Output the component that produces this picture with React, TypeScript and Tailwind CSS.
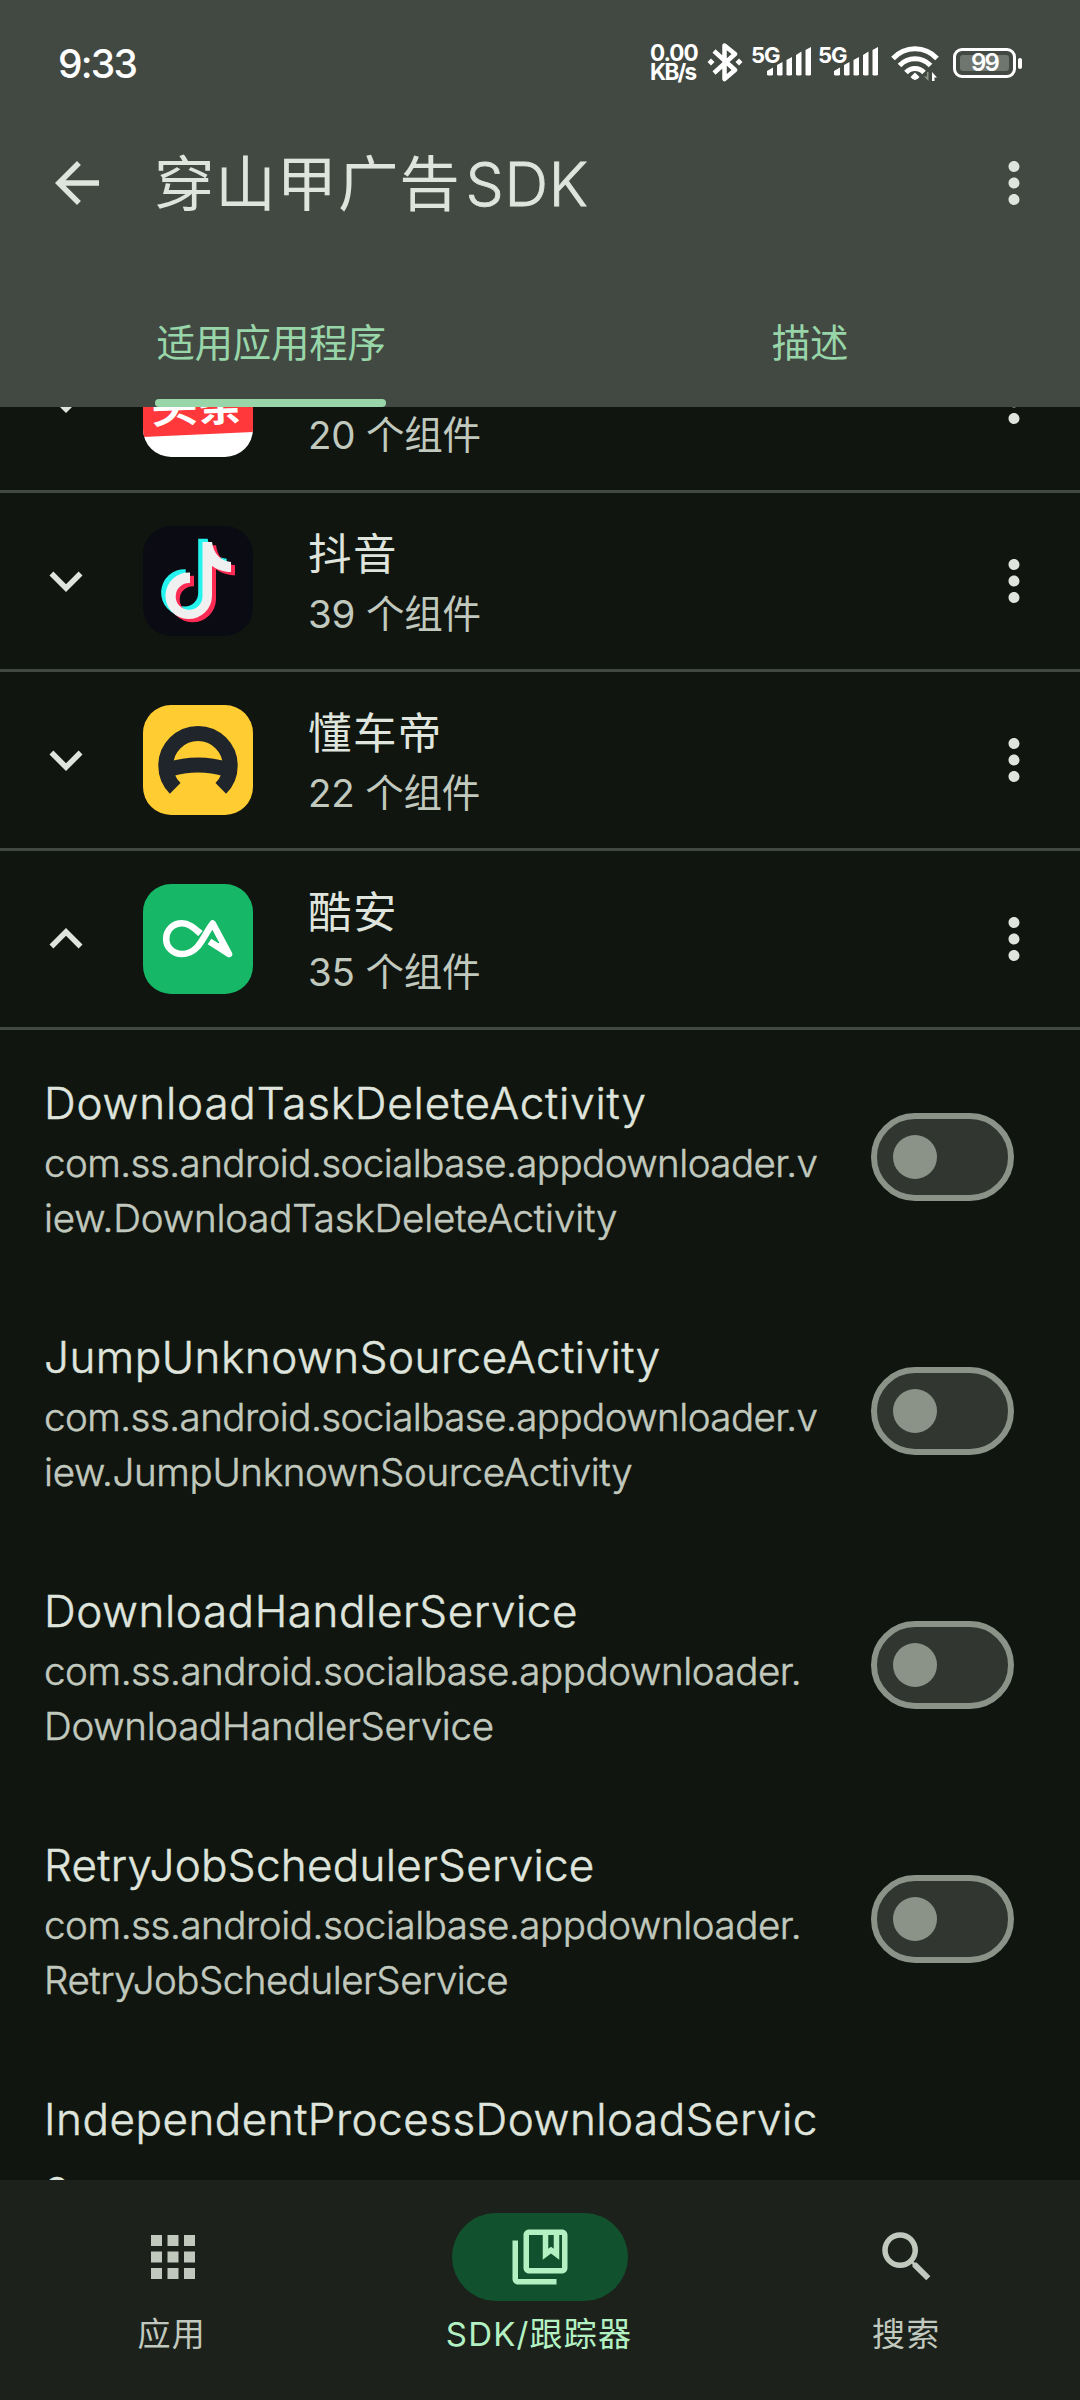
import type { ReactNode } from "react";
import { MdApps, MdArrowBack, MdExpandLess, MdExpandMore, MdMoreVert, MdSearch } from "react-icons/md";
import { twMerge } from "tailwind-merge";

interface AppEntry {
    name: string;
    count: number;
    icon: ReactNode;
    expanded?: boolean;
}

interface Line {
    text: string;
    tracking: string;
}

interface ComponentEntry {
    title: Line[];
    path: Line[];
}

const NOTE_PATH =
    "M59.5 16H69C70.5 27 77 35 88 36V46C80.5 46 74 43.5 69 40V70A23.3 23.3 0 1 1 47 46.5V57A13.4 13.4 0 1 0 59.5 70Z";

function ToutiaoIcon() {
    return (
        <svg viewBox="0 0 110 110" className="size-[110px] rounded-[28px] bg-white">
            <path d="M0 0H110V85L0 90Z" fill="#ff383c" />
            <text
                x="9"
                y="75"
                textLength="92"
                lengthAdjust="spacingAndGlyphs"
                transform="rotate(-2 55 75)"
                className="fill-white font-['Noto_Sans_CJK_SC',sans-serif] text-[42px] font-bold">
                头条
            </text>
        </svg>
    );
}

function DouyinIcon() {
    return (
        <svg viewBox="0 0 110 110" className="size-[110px] rounded-[28px] bg-[#0b0b14]">
            <path d={NOTE_PATH} fill="#25f4ee" transform="translate(-4.3 -3.2)" />
            <path d={NOTE_PATH} fill="#fe2c55" transform="translate(4 3.2)" />
            <path d={NOTE_PATH} fill="#f0f0f0" />
        </svg>
    );
}

function DongchediIcon() {
    return (
        <svg viewBox="0 0 110 110" className="size-[110px] rounded-[28px] bg-[#ffcd32]">
            <g fill="none" stroke="#20242b" strokeWidth="15">
                <path d="M32.2 83.4A32.2 32.2 0 1 1 77.8 83.4" />
                <path d="M26 64.5Q55 55.5 84 64.5" />
            </g>
        </svg>
    );
}

function CoolapkIcon() {
    return (
        <svg viewBox="0 0 110 110" className="size-[110px] rounded-[28px] bg-[#16b868]">
            <path
                d="M57.5 49.5C51 44 46 39.3 39 39.3C30 39.3 23.2 46 23.2 55C23.2 63.5 30 70 39 70C56 70 60 52 69.7 39.5L86 70L66.5 57.5"
                fill="none"
                stroke="white"
                strokeWidth="6.6"
                strokeLinejoin="round"
            />
            <path d="M76.5 58.5L74 52L86 70L73 61.5Z" fill="white" />
        </svg>
    );
}

const apps: AppEntry[] = [
    { name: "今日头条", count: 20, icon: <ToutiaoIcon /> },
    { name: "抖音", count: 39, icon: <DouyinIcon /> },
    { name: "懂车帝", count: 22, icon: <DongchediIcon /> },
    { name: "酷安", count: 35, icon: <CoolapkIcon />, expanded: true },
];

// 换行位置固定，长类名会在任意字符处断开
const components: ComponentEntry[] = [
    {
        title: [{ text: "DownloadTaskDeleteActivity", tracking: "tracking-[0.82px]" }],
        path: [
            { text: "com.ss.android.socialbase.appdownloader.v", tracking: "tracking-[-0.55px]" },
            { text: "iew.DownloadTaskDeleteActivity", tracking: "tracking-[-0.18px]" },
        ],
    },
    {
        title: [{ text: "JumpUnknownSourceActivity", tracking: "tracking-[0.5px]" }],
        path: [
            { text: "com.ss.android.socialbase.appdownloader.v", tracking: "tracking-[-0.55px]" },
            { text: "iew.JumpUnknownSourceActivity", tracking: "tracking-[-0.36px]" },
        ],
    },
    {
        title: [{ text: "DownloadHandlerService", tracking: "tracking-[0.57px]" }],
        path: [
            { text: "com.ss.android.socialbase.appdownloader.", tracking: "tracking-[-0.43px]" },
            { text: "DownloadHandlerService", tracking: "tracking-[-0.3px]" },
        ],
    },
    {
        title: [{ text: "RetryJobSchedulerService", tracking: "tracking-[0.27px]" }],
        path: [
            { text: "com.ss.android.socialbase.appdownloader.", tracking: "tracking-[-0.43px]" },
            { text: "RetryJobSchedulerService", tracking: "tracking-[-0.5px]" },
        ],
    },
    {
        title: [
            { text: "IndependentProcessDownloadServic", tracking: "tracking-[0.5px]" },
            { text: "e", tracking: "tracking-normal" },
        ],
        path: [],
    },
];

function Signal() {
    return (
        <div className="flex w-[61px]">
            <span className="-mr-3 h-6 w-7 text-[22px] leading-6 font-bold tracking-[-1px]">5G</span>
            <svg viewBox="0 0 45 32" className="mt-0.5 h-8 w-[45px] shrink-0 fill-white">
                <path d="M0 30V26L6 22.5V30Q3 31 0 30ZM10 30V20L15.500 17V30Q13 31 10 30ZM19.500 30V15L25 12V30Q22 31 19.500 30ZM29 30V10L34.500 6.500V30Q32 31 29 30ZM38.500 30V5L44 2V30Q41 31 38.500 30Z" />
            </svg>
        </div>
    );
}

function StatusBar() {
    return (
        <div className="flex h-[127px] justify-between pr-[58px] pl-[58px] text-white">
            <span className="mt-[40px] text-[39px] leading-12 font-medium tracking-[-1.8px]">9:33</span>
            <div className="mt-[41px] flex h-11 items-start">
                <div className="w-[57px] pt-0.5 text-[22.500px] leading-5 font-bold whitespace-nowrap">
                    <p className="tracking-[-1px]">0.00</p>
                    <p className="-mt-px tracking-[-1.8px]">KB/s</p>
                </div>
                <svg viewBox="0 0 36 40" className="mt-px h-10 w-9" fill="none" stroke="white" strokeWidth="4.500">
                    <path d="M7 9L28 28L17.500 37V3.500L28 12L7 31" strokeLinejoin="round" />
                    <path d="M4 16.500L7.500 20L4 23.500L.5 20ZM32 16.500L35.500 20L32 23.500L28.500 20Z" fill="white" stroke="none" />
                </svg>
                <div className="ml-2 flex gap-1.5 pt-0.5">
                    <Signal />
                    <Signal />
                </div>
                <svg viewBox="0 0 48 36" className="mt-[5px] ml-3 h-9 w-12" fill="none" stroke="white" strokeWidth="5">
                    <path d="M2 12.500C14 -.5 34 -.5 46 12.500" />
                    <path d="M8.500 19.500C17 10.500 31 10.500 39.500 19.500" />
                    <path d="M15 26.500C20 21 28 21 33 26.500" />
                    <path d="M24 26.500L28.500 31Q24 37 19.500 31Z" fill="white" stroke="none" />
                    <path d="M37.500 26V35L33 30.500H36V26Z" fill="#8b9389" stroke="none" />
                    <path d="M41 35V26L46 31.500H43.500V35Z" fill="white" stroke="none" />
                </svg>
                <div className="mt-[7px] ml-[14px] flex items-center gap-0.5">
                    <div className="flex h-[30px] w-[63px] rounded-[9px] border-3 border-white p-1">
                        <div className="flex flex-1 items-center justify-center rounded-[3px] bg-[#6f766f] text-[24px] leading-none font-semibold tracking-[-1.8px]">
                            99
                        </div>
                    </div>
                    <div className="h-[11px] w-1 rounded-sm bg-white" />
                </div>
            </div>
        </div>
    );
}

function AppRow({ name, count, icon, expanded }: AppEntry) {
    return (
        <div className="flex h-[179px] items-center border-b-3 border-[#424942] pr-[33px] pl-[33px]">
            {expanded ? <MdExpandLess className="size-[66px]" /> : <MdExpandMore className="size-[66px]" />}
            <div className="ml-11">{icon}</div>
            <div className="ml-[55px] flex-1 pt-px">
                <p className="text-[43.500px] leading-[66px] tracking-[1.4px]">{name}</p>
                <p className="text-[38.500px] leading-[55px] tracking-[-0.2px] text-[#c1c9be]">{count} 个组件</p>
            </div>
            <MdMoreVert className="size-[66px]" />
        </div>
    );
}

function TitleLine({ text, tracking }: Line) {
    return (
        <p className={twMerge("text-[44px] leading-[66px] font-light [-webkit-text-stroke:0.5px]", tracking)}>{text}</p>
    );
}

function ComponentRow({ title, path }: ComponentEntry) {
    return (
        <div className="flex min-h-[254px] items-center justify-between pr-[66px] pl-11">
            <div className="pt-0.5 whitespace-nowrap">
                {title.map(line => (
                    <TitleLine key={line.text} {...line} />
                ))}
                {path.map(({ text, tracking }) => (
                    <p
                        key={text}
                        className={twMerge(
                            "text-[38.500px] leading-[55px] font-light text-[#c1c9be] [-webkit-text-stroke:0.5px]",
                            tracking,
                        )}>
                        {text}
                    </p>
                ))}
            </div>
            <div className="flex h-22 w-[143px] shrink-0 items-center rounded-full border-6 border-[#8b9389] bg-[#313630] pl-4">
                <div className="size-11 rounded-full bg-[#8b9389]" />
            </div>
        </div>
    );
}

function NavItem({ icon, label, active }: { icon: ReactNode; label: string; active?: boolean }) {
    return (
        <div className={twMerge("flex flex-1 flex-col items-center gap-[11px] text-[#c1c9be]", active && "text-[#b3f1c3]")}>
            <div className={twMerge("flex h-22 w-44 items-center justify-center rounded-full", active && "bg-[#12512d]")}>
                {icon}
            </div>
            <span className="pr-0.5 text-[33px] leading-11 tracking-[1.2px]">{label}</span>
        </div>
    );
}

export default function App() {
    return (
        <div
            lang="zh-CN"
            className="flex h-[2400px] w-[1080px] flex-col overflow-hidden bg-[#101510] font-['Inter','Noto_Sans_CJK_SC',sans-serif] text-[#dfe4dc]">
            <header className="h-[407px] shrink-0 bg-[#424942]">
                <StatusBar />
                <div className="flex h-28 items-center pr-[33px] pl-11">
                    <MdArrowBack className="size-[66px]" />
                    <h1 className="ml-11 flex-1 pt-0.5 text-[60.500px] tracking-[0.8px]">
                        穿山甲广告<span className="ml-[5px] font-light [-webkit-text-stroke:0.8px]">SDK</span>
                    </h1>
                    <MdMoreVert className="size-[66px]" />
                </div>
                <div className="mt-[36px] flex h-[132px] text-[38.500px] leading-[136px] text-[#98d5a9]">
                    <div className="flex flex-1 flex-col items-center">
                        <span className="h-[124px] pl-0.5 tracking-[-0.3px]">适用应用程序</span>
                        <span className="h-2 w-[231px] rounded-full bg-[#98d5a9]" />
                    </div>
                    <span className="flex-1 text-center tracking-[-0.3px]">描述</span>
                </div>
            </header>

            <main className="min-h-0 flex-1 overflow-hidden">
                {/* 列表已向上滚动，首行被标题栏遮住一半 */}
                <div className="-mt-[93px]">
                    {apps.map(app => (
                        <AppRow key={app.name} {...app} />
                    ))}
                    {components.slice(0, 4).map(item => (
                        <ComponentRow key={item.title[0].text} {...item} />
                    ))}
                    <div className="px-11 pt-10 whitespace-nowrap">
                        {components[4].title.map(line => (
                            <TitleLine key={line.text} {...line} />
                        ))}
                    </div>
                </div>
            </main>

            <nav className="flex h-[220px] shrink-0 gap-[22px] bg-[#1c211c] pt-[33px]">
                <NavItem icon={<MdApps className="size-[66px]" />} label="应用" />
                <NavItem
                    active
                    label="SDK/跟踪器"
                    icon={
                        <svg viewBox="0 0 24 24" className="size-[66px] fill-current">
                            <path d="M4 6H2v14c0 1.1.9 2 2 2h14v-2H4V6zM20 2H8c-1.1 0-2 .9-2 2v12c0 1.1.9 2 2 2h12c1.1 0 2-.9 2-2V4c0-1.1-.9-2-2-2zm0 14H8V4h5v9l3-2.250L19 13V4h1v12zm-5-7V4h2v5l-1-.75L15 9z" />
                        </svg>
                    }
                />
                <NavItem icon={<MdSearch className="size-[66px]" />} label="搜索" />
            </nav>
        </div>
    );
}
